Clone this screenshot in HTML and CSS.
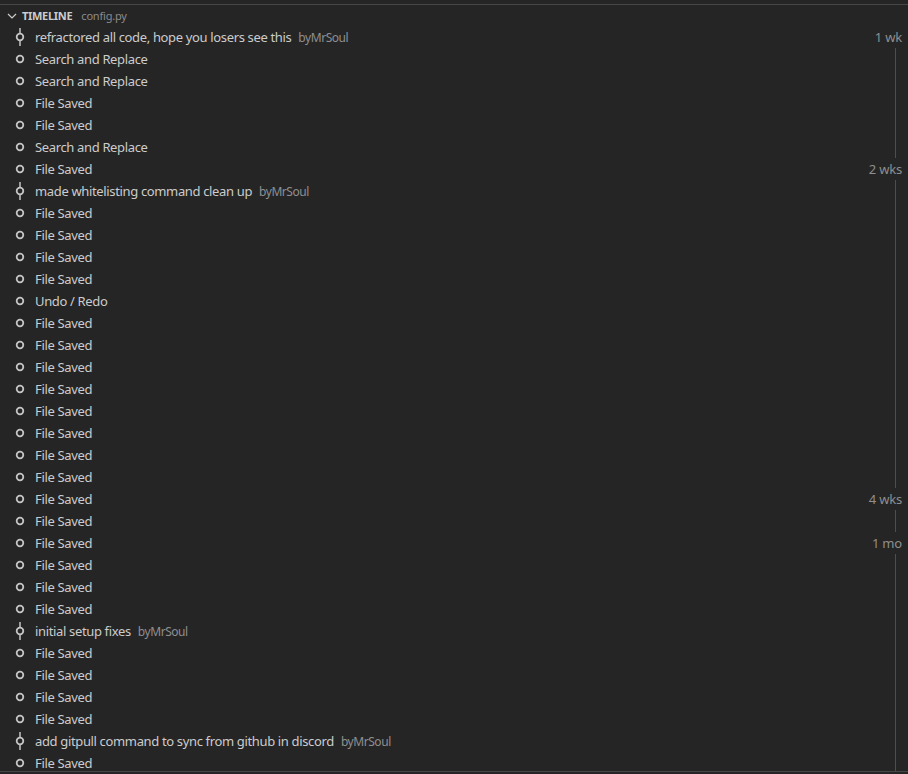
FILE: index.html
```html
<!DOCTYPE html>
<html lang="en">
<head>
    <meta charset="UTF-8">
    <title>Timeline</title>
    <link rel="stylesheet" href="styles.css">
</head>
<body>

<div class="panel">
    <div class="header">
        <svg class="chevron" width="10" height="10" viewBox="0 0 10 10"><path d="M1 3 L5 7 L9 3" fill="none" stroke="#cccccc" stroke-width="1.2"/></svg>
        <span class="title">TIMELINE</span>
        <span class="file">config.py</span>
    </div>
    <div class="list" id="list"></div>
</div>

<script>
    const items = [
        ['c', 'refractored all code, hope you losers see this', 'byMrSoul', '1 wk'],
        ['s', 'Search and Replace'],
        ['s', 'Search and Replace'],
        ['s', 'File Saved'],
        ['s', 'File Saved'],
        ['s', 'Search and Replace'],
        ['s', 'File Saved', '', '2 wks'],
        ['c', 'made whitelisting command clean up', 'byMrSoul'],
        ['s', 'File Saved'],
        ['s', 'File Saved'],
        ['s', 'File Saved'],
        ['s', 'File Saved'],
        ['s', 'Undo / Redo'],
        ['s', 'File Saved'],
        ['s', 'File Saved'],
        ['s', 'File Saved'],
        ['s', 'File Saved'],
        ['s', 'File Saved'],
        ['s', 'File Saved'],
        ['s', 'File Saved'],
        ['s', 'File Saved'],
        ['s', 'File Saved', '', '4 wks'],
        ['s', 'File Saved'],
        ['s', 'File Saved', '', '1 mo'],
        ['s', 'File Saved'],
        ['s', 'File Saved'],
        ['s', 'File Saved'],
        ['c', 'initial setup fixes', 'byMrSoul'],
        ['s', 'File Saved'],
        ['s', 'File Saved'],
        ['s', 'File Saved'],
        ['s', 'File Saved'],
        ['c', 'add gitpull command to sync from github in discord', 'byMrSoul'],
        ['s', 'File Saved']
    ];

    const commitIcon = '<svg width="12" height="20" viewBox="0 0 12 20"><line x1="6" y1="1" x2="6" y2="19" stroke="#c5c5c5" stroke-width="1.5"/><circle cx="6" cy="10" r="3.3" fill="#252526" stroke="#c5c5c5" stroke-width="1.8"/></svg>';
    const saveIcon = '<svg width="12" height="20" viewBox="0 0 12 20"><circle cx="6" cy="10" r="3.3" fill="none" stroke="#c5c5c5" stroke-width="1.8"/></svg>';

    const list = document.getElementById('list');
    items.forEach(([kind, label, desc, time]) => {
        const row = document.createElement('div');
        row.className = 'row';
        row.innerHTML =
            `<span class="icon">${kind === 'c' ? commitIcon : saveIcon}</span>` +
            `<span class="label">${label}</span>` +
            (desc ? `<span class="desc">${desc}</span>` : '') +
            (time ? `<span class="time">${time}</span>` : '<span class="divider"></span>');
        list.appendChild(row);
    });
</script>

</body>
</html>
```

FILE: styles.css
```css
body {
    margin: 0;
    background-color: #252526;
    font-family: "Noto Sans", "Open Sans", sans-serif;
    font-size: 13px;
    color: #cccccc;
    overflow: hidden;
}
.panel {
    margin-top: 4px;
    height: 768px;
    box-sizing: border-box;
    border-top: 1px solid #474747;
    border-bottom: 1px solid #474747;
    overflow: hidden;
}
.header {
    height: 21px;
    display: flex;
    align-items: center;
    padding-left: 7px;
}
.chevron {
    margin-right: 5px;
}
.title {
    font-size: 11px;
    font-weight: bold;
    letter-spacing: -0.3px;
    color: #cccccc;
}
.file {
    font-size: 11px;
    letter-spacing: -0.2px;
    color: #8b8b8b;
    margin-left: 9px;
}
.row {
    height: 22px;
    display: flex;
    align-items: center;
    padding-left: 14px;
}
.icon {
    width: 12px;
    height: 20px;
    margin-right: 9px;
    display: flex;
}
.label {
    white-space: nowrap;
    letter-spacing: -0.35px;
}
.desc {
    margin-left: 7px;
    font-size: 12px;
    letter-spacing: -0.45px;
    color: #8f8f8f;
    white-space: nowrap;
}
.time {
    margin-left: auto;
    padding-right: 6px;
    letter-spacing: -0.2px;
    color: #8f8f8f;
}
.divider {
    margin-left: auto;
    margin-right: 12px;
    width: 1px;
    align-self: stretch;
    background-color: #4e4e4e;
}
```
